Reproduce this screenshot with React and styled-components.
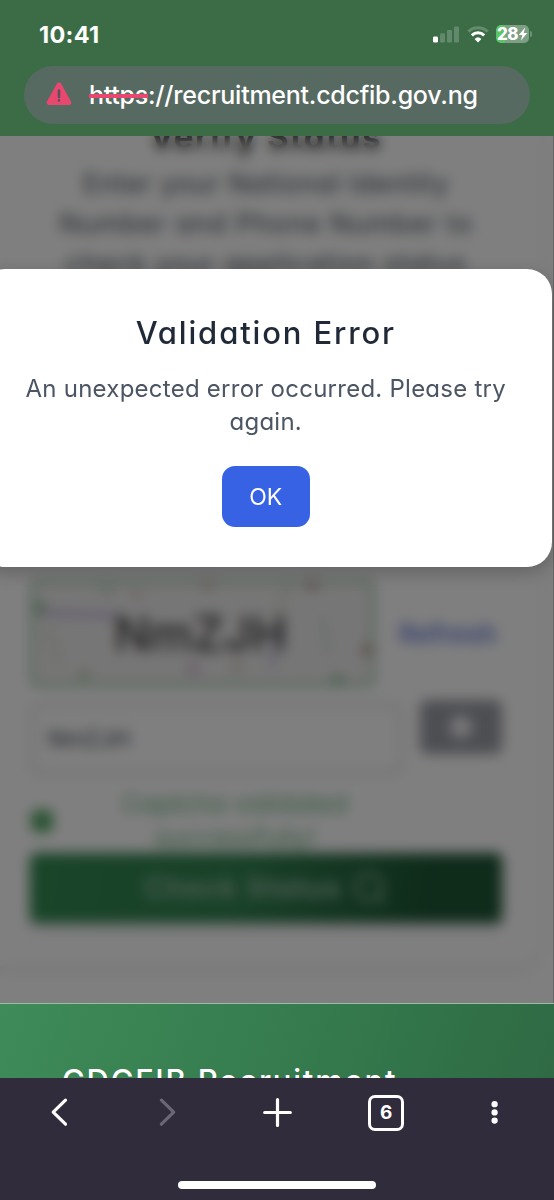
import styled, { createGlobalStyle } from "styled-components"

export default function App(){
    return(
        <Screen>
            <GlobalStyle/>
            <Header>
                <StatusBar>
                    <Clock>10:41</Clock>
                    <StatusIcons>
                        <SignalIcon/>
                        <WifiIcon/>
                        <BatteryBox>
                            <Battery><BatteryText>28</BatteryText><BoltIcon/></Battery>
                            <BatteryTip/>
                        </BatteryBox>
                    </StatusIcons>
                </StatusBar>
                <AddressBar>
                    <WarningIcon/>
                    <Url><Scheme>https</Scheme>://recruitment.cdcfib.gov.ng</Url>
                </AddressBar>
            </Header>

            <Page>
                <Card>
                    <CardTitle>Verify Status</CardTitle>
                    <CardText>
                        <Line space="0.6px">Enter your National Identity</Line>
                        <Line space="0.9px">Number and Phone Number to</Line>
                        <Line space="0.8px">check your application status</Line>
                    </CardText>
                    <CaptchaRow>
                        <Captcha><CaptchaNoise/><CaptchaText>NmZJH</CaptchaText></Captcha>
                        <Refresh>Refresh</Refresh>
                    </CaptchaRow>
                    <InputRow>
                        <Input>NmZJH</Input>
                        <SmallButton><Dot/></SmallButton>
                    </InputRow>
                    <Message>
                        <Check/>
                        <MessageText>Captcha validated<br/>successfully!</MessageText>
                    </Message>
                    <Submit>Check Status <SearchIcon/></Submit>
                </Card>
                <Overlay/>
                <Modal>
                    <ModalTitle>Validation Error</ModalTitle>
                    <ModalText>An unexpected error occurred. Please try<br/>again.</ModalText>
                    <OkButton>OK</OkButton>
                </Modal>
            </Page>

            <Footer>CDCFIB Recruitment</Footer>

            <BottomNav>
                <NavIcons>
                    <NavIcon viewBox="0 0 40 40"><path d="M25.5 8.2L13.2 20.2l12.3 12"/></NavIcon>
                    <NavIcon viewBox="0 0 40 40" $faded><path d="M12.4 8.2L24.7 20.2 12.4 32.2"/></NavIcon>
                    <NavIcon viewBox="0 0 40 40"><path d="M19.5 7.5v26M6.7 20.5h25.6"/></NavIcon>
                    <Tabs>6</Tabs>
                    <NavIcon viewBox="0 0 40 40" $dots><path d="M19.6 12.2h.01M19.6 20.4h.01M19.6 28.6h.01"/></NavIcon>
                </NavIcons>
                <HomeBar/>
            </BottomNav>
        </Screen>
    )
}

function SignalIcon(){
    return(
        <svg width="26" height="17" viewBox="0 0 26 17" fill="#fff">
            <rect x="0" y="10.5" width="5" height="6" rx="1.3"/>
            <g opacity=".2">
                <rect x="7" y="7.3" width="5" height="9.2" rx="1.3"/>
                <rect x="14" y="4" width="5" height="12.5" rx="1.3"/>
                <rect x="21" y="0.6" width="5" height="15.9" rx="1.3"/>
            </g>
        </svg>
    )
}

function WifiIcon(){
    return(
        <svg width="22" height="17" viewBox="0 0 22 17" fill="none" stroke="#fff" strokeWidth="3">
            <path opacity=".22" d="M1.3 5.6a14 14 0 0 1 19.4 0"/>
            <path d="M4.8 9.3a9 9 0 0 1 12.4 0"/>
            <path stroke="none" fill="#fff" d="M11 16.4l-3.4-3.5a5 5 0 0 1 6.8 0z"/>
        </svg>
    )
}

function BoltIcon(){
    return(
        <svg width="10" height="14" viewBox="0 0 9 14" fill="#fff">
            <path d="M6.7.5L.3 7.9h3.5L2.4 13.5 8.8 6H5.2z"/>
        </svg>
    )
}

function WarningIcon(){
    return(
        <svg width="26" height="24" viewBox="0 0 26 24">
            <path d="M13 3L3.2 20.6h19.6z" fill="#e8476e" stroke="#e8476e" strokeWidth="5" strokeLinejoin="round"/>
            <path d="M13 8.5v6.5M13 18.4v.1" stroke="#5a5060" strokeWidth="2.6" strokeLinecap="round"/>
        </svg>
    )
}

function SearchIcon(){
    return(
        <svg width="34" height="34" viewBox="0 0 34 34" fill="none" stroke="currentColor" strokeWidth="3">
            <circle cx="16" cy="16" r="13"/>
            <path d="M24 24l7 8"/>
        </svg>
    )
}

function CaptchaNoise(){
    return(
        <Noise viewBox="0 0 345 108" fill="none" strokeWidth="3">
            <path d="M14 34l75 3" stroke="#c3bbdf" strokeWidth="6"/>
            <path d="M18 48l12 39M260 3l-22 58" stroke="#c3cdb0"/>
            <path d="M291 38l8 38" stroke="#aacfc5"/>
            <path d="M243 45v45" stroke="#cbc5e3" strokeWidth="6"/>
            <g stroke="none">
                <circle cx="10" cy="29" r="6" fill="#8fbb9b"/>
                <circle cx="77" cy="12" r="4" fill="#a7cab1"/>
                <circle cx="107" cy="16" r="4" fill="#d6b9b3"/>
                <circle cx="178" cy="5" r="5" fill="#c2aaa0"/>
                <circle cx="282" cy="6" r="6" fill="#b9a19c"/>
                <circle cx="337" cy="71" r="6" fill="#b99f97"/>
                <circle cx="163" cy="90" r="6" fill="#cfb6d1"/>
                <circle cx="207" cy="88" r="5" fill="#d0c2b0"/>
                <circle cx="54" cy="96" r="5" fill="#b2c59f"/>
                <circle cx="308" cy="101" r="6" fill="#98bfa4"/>
            </g>
        </Noise>
    )
}

const GlobalStyle=createGlobalStyle`
    *{
        box-sizing: border-box;
    }
    body{
        margin: 0;
        font-family: Inter, "Liberation Sans", sans-serif;
    }
`
const Screen=styled.div`
    width: 554px;
    height: 1200px;
    display: flex;
    flex-direction: column;
    overflow: hidden;
    white-space: nowrap;
`
const Header=styled.header`
    height: 136px;
    flex: none;
    padding: 0 24px;
    background: #3b6c46;
    color: #fff;
`
const StatusBar=styled.div`
    height: 66px;
    padding: 2px 0 0 15px;
    display: flex;
    align-items: center;
    justify-content: space-between;
`
const Clock=styled.span`
    font-size: 23.5px;
    font-weight: 700;
    letter-spacing: 0.3px;
`
const StatusIcons=styled.div`
    display: flex;
    align-items: center;
    gap: 8px;
`
const BatteryBox=styled.div`
    display: flex;
    align-items: center;
    gap: 1px;
    margin: 0 -2px 0 -1px;
`
const Battery=styled.div`
    width: 33px;
    height: 18px;
    border-radius: 5px;
    background: linear-gradient(90deg, #5bc465 28%, #7d9f85 28%);
    display: flex;
    align-items: center;
    justify-content: center;
`
const BatteryText=styled.span`
    font-size: 17px;
    line-height: 18px;
    font-weight: 800;
    letter-spacing: -0.5px;
`
const BatteryTip=styled.i`
    width: 2px;
    height: 6px;
    border-radius: 0 2px 2px 0;
    background: #6c9575;
`
const AddressBar=styled.div`
    height: 58px;
    padding: 0 22px;
    border-radius: 29px;
    background: #576a62;
    display: flex;
    align-items: center;
    gap: 17px;
    svg{
        margin-top: -3px;
    }
`
const Url=styled.span`
    font-size: 25px;
    font-weight: 500;
    letter-spacing: -0.25px;
`
const Scheme=styled.span`
    text-decoration: line-through #e8476e 4px;
`
const Page=styled.main`
    height: 868px;
    flex: none;
    position: relative;
    background: #fff;
    border-bottom: 1px solid #9abea5;
    overflow: hidden;
    font-feature-settings: "cv11";
`
const Card=styled.section`
    width: 561px;
    height: 850px;
    margin: -20px 0 0 -20px;
    padding: 0 38px 0 49px;
    border: 1px solid #f8f8f8;
    border-radius: 24px;
    box-shadow: 0 5px 12px rgba(0,0,0,.08);
    text-align: center;
`
const CardTitle=styled.h2`
    margin: 0;
    font-size: 33px;
    line-height: 40px;
    font-weight: 700;
    letter-spacing: 1.7px;
    color: #2b2b2b;
`
const CardText=styled.p`
    margin: 7px 0 0;
    font-size: 27px;
    line-height: 40px;
    color: #4b5563;
`
const Line=styled.span`
    display: block;
    letter-spacing: ${props=>props.space};
`
const CaptchaRow=styled.div`
    margin-top: 295px;
    display: flex;
    align-items: center;
    gap: 24px;
`
const Captcha=styled.div`
    width: 345px;
    height: 108px;
    border: 5px solid #b3d3bb;
    border-radius: 5px;
    background: #efeded;
    position: relative;
    display: flex;
    align-items: center;
    justify-content: center;
`
const Noise=styled.svg`
    position: absolute;
    top: -5px;
    left: -5px;
    width: 345px;
    height: 108px;
`
const CaptchaText=styled.span`
    position: relative;
    left: -2px;
    font-size: 48px;
    font-weight: 500;
    color: #3b3b3b;
`
const Refresh=styled.span`
    font-size: 26px;
    font-weight: 600;
    color: #6c7fdc;
`
const InputRow=styled.div`
    height: 72px;
    margin-top: 16px;
    display: flex;
    gap: 17px;
`
const Input=styled.div`
    width: 375px;
    height: 72px;
    padding-left: 14px;
    border: 4px solid #e0e0e9;
    border-radius: 12px;
    font-size: 23px;
    line-height: 64px;
    text-align: left;
    color: #374151;
`
const SmallButton=styled.div`
    width: 82px;
    height: 54px;
    margin-top: -3px;
    border-radius: 7px;
    background: #9b9da6;
    display: flex;
    align-items: center;
    justify-content: center;
`
const Dot=styled.i`
    width: 22px;
    height: 22px;
    border-radius: 50%;
    background: #f2f2f5;
`
const Message=styled.div`
    height: 78px;
    padding-top: 14px;
    display: flex;
    align-items: center;
`
const Check=styled.i`
    width: 22px;
    height: 22px;
    margin-left: 1px;
    border-radius: 6px;
    background: #53a562;
`
const MessageText=styled.p`
    margin: 0;
    width: 361px;
    margin-left: 1px;
    font-size: 26px;
    line-height: 34px;
    color: #6fb583;
`
const Submit=styled.div`
    height: 70px;
    border-radius: 6px;
    background: linear-gradient(100deg, #348b53, #318150 45%, #1e5635 85%);
    box-shadow: 0 6px 10px rgba(0,0,0,.12);
    display: flex;
    align-items: center;
    justify-content: center;
    gap: 12px;
    font-size: 28px;
    font-weight: 600;
    letter-spacing: 1.3px;
    color: #a5c4af;
`
const Overlay=styled.div`
    position: absolute;
    inset: 0;
    background: rgba(0,0,0,.5);
    backdrop-filter: blur(6.5px);
    border-right: 1px solid #666;
`
const Modal=styled.div`
    position: absolute;
    top: 133px;
    left: -20px;
    width: 571.5px;
    height: 298px;
    padding-top: 44px;
    border-radius: 25px;
    background: #fff;
    box-shadow: 0 6px 18px rgba(0,0,0,.22);
    display: flex;
    flex-direction: column;
    align-items: center;
    text-align: center;
`
const ModalTitle=styled.h2`
    margin: 0;
    font-size: 31px;
    line-height: 40px;
    font-weight: 500;
    letter-spacing: 1.85px;
    color: #1f2937;
`
const ModalText=styled.p`
    margin: 19px 0 28px;
    font-size: 24px;
    line-height: 33px;
    letter-spacing: 0.25px;
    color: #4b5563;
`
const OkButton=styled.button`
    width: 88px;
    height: 61px;
    border: none;
    border-radius: 13px;
    background: #3662e3;
    color: #fff;
    font-family: inherit;
    font-size: 23px;
`
const Footer=styled.footer`
    height: 74px;
    flex: none;
    padding: 57px 0 0 62px;
    overflow: hidden;
    background: linear-gradient(110deg, #3f8b59, #34794c 60%, #2f6a44);
    color: #fff;
    font-size: 31px;
    line-height: 40px;
    font-weight: 500;
    letter-spacing: 1.8px;
`
const BottomNav=styled.nav`
    height: 122px;
    flex: none;
    background: #312c3c;
`
const NavIcons=styled.div`
    height: 106px;
    padding: 14px 39px 0 40px;
    display: flex;
    justify-content: space-between;
`
const NavIcon=styled.svg`
    width: 40px;
    height: 40px;
    fill: none;
    stroke: ${props=>props.$faded ? "#6b6775" : "#fff"};
    stroke-width: ${props=>props.$dots ? "6.3" : "3.2"};
    stroke-linecap: round;
    stroke-linejoin: round;
`
const Tabs=styled.div`
    width: 36px;
    height: 36px;
    margin: 3px 2px 0;
    border: 3px solid #fff;
    border-radius: 7px;
    color: #fff;
    font-size: 19px;
    font-weight: 700;
    line-height: 30px;
    text-align: center;
`
const HomeBar=styled.div`
    width: 198px;
    height: 8px;
    margin: -3px auto 0;
    border-radius: 4px;
    background: #fff;
`
